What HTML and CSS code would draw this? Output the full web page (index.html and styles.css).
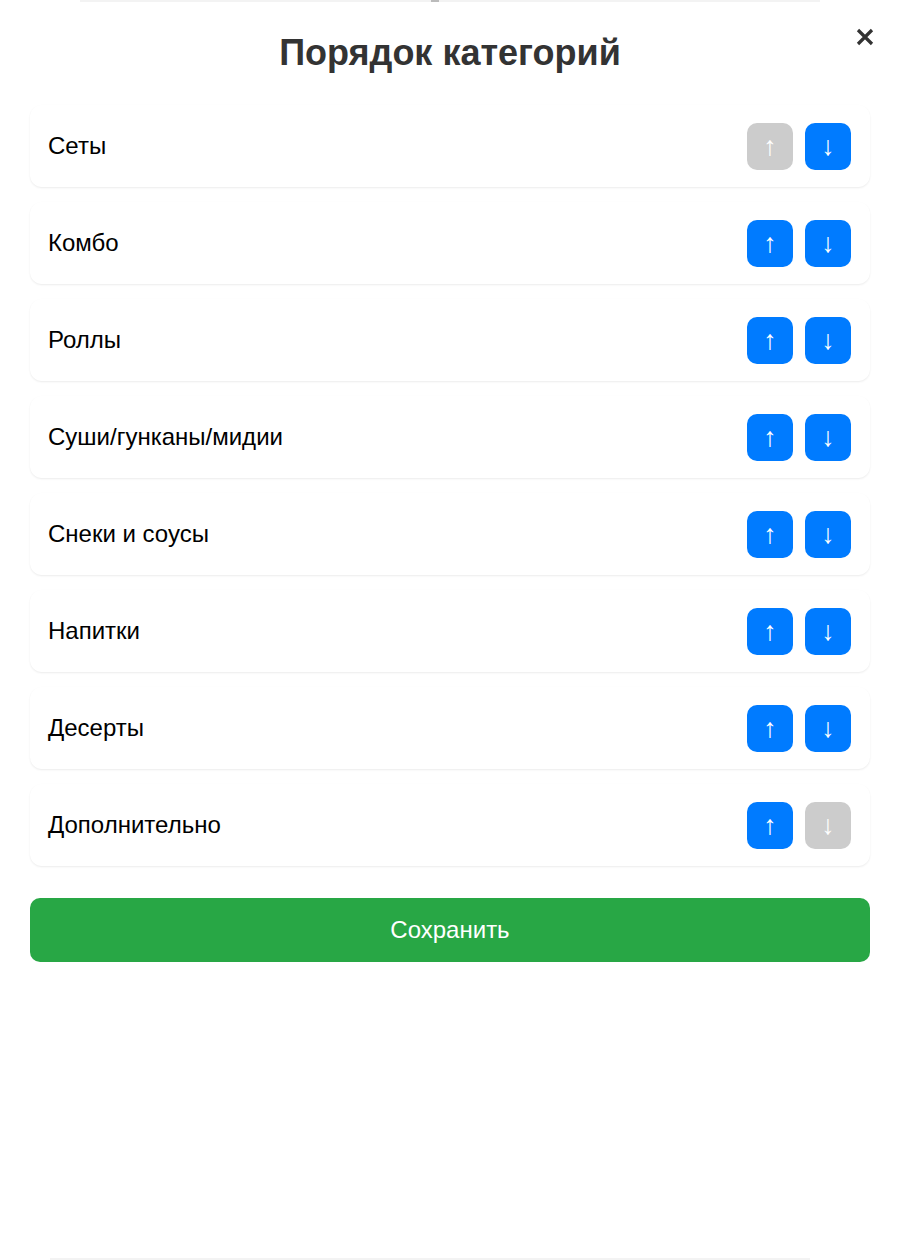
FILE: index.html
```html
<!DOCTYPE html>
<html lang="ru">
<head>
<meta charset="utf-8">
<title>Порядок категорий</title>
<link rel="stylesheet" href="styles.css">
</head>
<body>
<div class="peek-top"><span class="peek-mark"></span></div>
<div class="modal">
  <header class="modal-head">
    <h1 class="modal-title">Порядок категорий</h1>
    <button class="close-btn" aria-label="Закрыть">
      <svg width="18" height="18" viewBox="0 0 18 18"><path d="M2 2 L16 16 M16 2 L2 16" stroke="#333" stroke-width="3.2" stroke-linecap="butt"/></svg>
    </button>
  </header>
  <ul class="cat-list">
    <li class="cat-row"><span class="cat-name">Сеты</span><div class="cat-actions"><button class="arrow-btn disabled">↑</button><button class="arrow-btn">↓</button></div></li>
    <li class="cat-row"><span class="cat-name">Комбо</span><div class="cat-actions"><button class="arrow-btn">↑</button><button class="arrow-btn">↓</button></div></li>
    <li class="cat-row"><span class="cat-name">Роллы</span><div class="cat-actions"><button class="arrow-btn">↑</button><button class="arrow-btn">↓</button></div></li>
    <li class="cat-row"><span class="cat-name">Суши/гунканы/мидии</span><div class="cat-actions"><button class="arrow-btn">↑</button><button class="arrow-btn">↓</button></div></li>
    <li class="cat-row"><span class="cat-name">Снеки и соусы</span><div class="cat-actions"><button class="arrow-btn">↑</button><button class="arrow-btn">↓</button></div></li>
    <li class="cat-row"><span class="cat-name">Напитки</span><div class="cat-actions"><button class="arrow-btn">↑</button><button class="arrow-btn">↓</button></div></li>
    <li class="cat-row"><span class="cat-name">Десерты</span><div class="cat-actions"><button class="arrow-btn">↑</button><button class="arrow-btn">↓</button></div></li>
    <li class="cat-row"><span class="cat-name">Дополнительно</span><div class="cat-actions"><button class="arrow-btn">↑</button><button class="arrow-btn disabled">↓</button></div></li>
  </ul>
  <button class="save-btn">Сохранить</button>
</div>
<div class="peek-bottom"></div>
</body>
</html>
```
FILE: styles.css
```css
* { box-sizing: border-box; }
html, body { margin: 0; padding: 0; background: #fff; }
body {
  font-family: "Liberation Sans", Arial, sans-serif;
  width: 900px;
  height: 1260px;
  display: flex;
  flex-direction: column;
  overflow: hidden;
}
.peek-top {
  height: 2px;
  margin: 0 80px;
  background: #f3f3f3;
  display: flex;
  justify-content: center;
}
.peek-mark {
  width: 8px;
  height: 2px;
  background: #bbb;
  margin-left: -30px;
}
.modal {
  flex: 1;
  padding: 0 30px;
}
.modal-head {
  position: relative;
  height: 103px;
  display: flex;
  justify-content: center;
  align-items: flex-start;
}
.modal-title {
  margin: 30px 0 0;
  font-size: 36px;
  line-height: 42px;
  font-weight: 700;
  color: #333;
}
.close-btn {
  position: absolute;
  right: -6px;
  top: 24px;
  width: 22px;
  height: 22px;
  padding: 0;
  border: 0;
  background: none;
  display: flex;
  align-items: center;
  justify-content: center;
}
.cat-list {
  list-style: none;
  margin: 0;
  padding: 0;
  display: flex;
  flex-direction: column;
  gap: 15px;
}
.cat-row {
  height: 82px;
  display: flex;
  align-items: center;
  justify-content: space-between;
  padding: 0 19px 0 18px;
  background: #fff;
  border-radius: 12px;
  box-shadow: 0 1px 2px rgba(0, 0, 0, 0.08);
}
.cat-name {
  font-size: 24px;
  color: #000;
}
.cat-actions {
  display: flex;
  gap: 12px;
}
.arrow-btn {
  width: 46px;
  height: 47px;
  border: 0;
  border-radius: 10px;
  background: #007bff;
  color: #fff;
  font-family: "Liberation Sans", Arial, sans-serif;
  font-size: 27px;
  padding: 0;
  display: flex;
  align-items: center;
  justify-content: center;
}
.arrow-btn.disabled { background: #ccc; }
.save-btn {
  display: block;
  width: 100%;
  height: 64px;
  margin-top: 32px;
  border: 0;
  border-radius: 10px;
  background: #28a745;
  color: #fff;
  font-family: "Liberation Sans", Arial, sans-serif;
  font-size: 24px;
}
.peek-bottom {
  height: 2px;
  margin: 0 90px 0 50px;
  background: #f3f3f3;
}
```
